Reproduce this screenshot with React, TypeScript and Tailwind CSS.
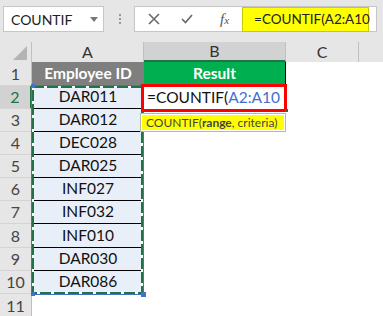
import React from 'react';

const ids = ['DAR011', 'DAR012', 'DEC028', 'DAR025', 'INF027', 'INF032', 'INF010', 'DAR030', 'DAR086'];
const heights = ['h-[24px]', 'h-[23px]', 'h-[23px]', 'h-[23px]', 'h-[23px]', 'h-[23px]', 'h-[23px]', 'h-[24px]', 'h-[23px]', 'h-[23px]'];

const RowHead: React.FC<{ n: number; active?: boolean }> = ({ n, active }) => (
  <div
    className={
      'w-[32px] shrink-0 flex items-center justify-center border-b border-[#d4d4d4] text-[16px] ' +
      (active
        ? 'bg-[#d2d2d2] text-[#217346] border-r-2 border-r-[#217346]'
        : 'bg-[#e6e6e6] text-[#444] border-r border-r-[#c0c0c0]')
    }
  >
    {n}
  </div>
);

export default function App() {
  return (
    <div className="w-[383px] h-[316px] overflow-hidden bg-white relative font-['Lato',sans-serif] text-[#222]">
      {/* formula toolbar */}
      <div className="h-[42px] bg-[#e6e6e6] flex items-start pt-[6px] pl-[3px]">
        <div className="w-[101px] h-[26px] bg-white border border-[#c6c6c6] flex items-center pl-[7px] pr-[5px]">
          <span className="text-[14px] text-[#222] flex-1">COUNTIF</span>
          <span className="w-0 h-0 border-l-[4px] border-r-[4px] border-t-[5px] border-l-transparent border-r-transparent border-t-[#777]" />
        </div>
        <div className="ml-[15px] mt-[8px] flex flex-col gap-[2px]">
          <span className="w-[2px] h-[2px] bg-[#9a9a9a]" />
          <span className="w-[2px] h-[2px] bg-[#9a9a9a]" />
          <span className="w-[2px] h-[2px] bg-[#9a9a9a]" />
        </div>
        <div className="ml-[13px] w-[243px] h-[26px] bg-white border border-[#c6c6c6] flex items-center">
          <svg width="12" height="12" viewBox="0 0 12 12" className="ml-[13px]">
            <path d="M1 1 L11 11 M11 1 L1 11" stroke="#6a6a6a" strokeWidth="1.6" />
          </svg>
          <svg width="12" height="10" viewBox="0 0 12 10" className="ml-[21px]">
            <path d="M1 5 L4.5 8.5 L11 1" stroke="#6a6a6a" strokeWidth="1.7" fill="none" />
          </svg>
          <span className="ml-[27px] font-['Liberation_Serif',serif] italic text-[15px] text-[#555]">
            f<span className="text-[11px]">x</span>
          </span>
          <div className="ml-[13px] w-[127px] h-[25px] bg-[#ffff00] border border-[#c9c900] flex items-center pl-[11px]">
            <span className="text-[13.5px] text-[#222] whitespace-nowrap">=COUNTIF(A2:A10</span>
          </div>
        </div>
      </div>

      {/* column headers */}
      <div className="flex h-[20px] bg-[#e6e6e6] text-[16px] text-[#333]">
        <div className="w-[32px] shrink-0 border-r border-[#c0c0c0] flex items-end justify-end pr-[4px] pb-[2px]">
          <svg width="14" height="14" viewBox="0 0 14 14">
            <polygon points="14,0 14,14 0,14" fill="#b4b4b4" />
          </svg>
        </div>
        <div className="w-[112px] shrink-0 border-r border-[#c0c0c0] flex items-center justify-center">A</div>
        <div className="w-[142px] shrink-0 border-r border-[#c0c0c0] bg-[#d2d2d2] border-b-2 border-b-[#217346] flex items-center justify-center">B</div>
        <div className="w-[73px] shrink-0 border-r border-[#c0c0c0] flex items-center justify-center">C</div>
        <div className="flex-1" />
      </div>

      {/* grid rows */}
      <div className="flex flex-col">
        <div className={'flex ' + heights[0]}>
          <RowHead n={1} />
          <div className="w-[112px] shrink-0 bg-[#7f7f7f] border-b border-black flex items-center justify-center text-white font-bold text-[15.5px]">
            Employee ID
          </div>
          <div className="w-[142px] shrink-0 bg-[#00b050] border-b border-r border-black flex items-center justify-center text-white font-bold text-[15.5px]">
            Result
          </div>
        </div>
        {ids.map((id, i) => (
          <div key={id} className={'flex ' + heights[i + 1]}>
            <RowHead n={i + 2} active={i === 0} />
            <div className="w-[112px] shrink-0 bg-[#e9eff8] border-b border-black flex items-center justify-center text-[15.5px] text-[#111]">
              {id}
            </div>
          </div>
        ))}
        <div className="flex h-[24px]">
          <RowHead n={11} />
        </div>
      </div>

      {/* copy range marching ants + reference highlight */}
      <svg className="absolute left-[31px] top-[84px]" width="116" height="214" viewBox="0 0 116 214">
        <rect x="0.5" y="1.5" width="112" height="209" fill="none" stroke="#4472c4" strokeWidth="1" />
        <rect x="2" y="3" width="109" height="206" fill="none" stroke="#ffffff" strokeWidth="2" />
        <rect x="2" y="3" width="109" height="206" fill="none" stroke="#217346" strokeWidth="2" strokeDasharray="11 3" />
        <rect x="0" y="0" width="4" height="4" fill="#4472c4" />
        <rect x="110" y="0" width="4" height="4" fill="#4472c4" />
        <rect x="0" y="208" width="4" height="4" fill="#4472c4" />
        <rect x="110" y="208" width="5" height="5" fill="#4472c4" />
      </svg>

      {/* in-cell editor */}
      <div className="absolute left-[141px] top-[84px] w-[146px] h-[28px] border-[3px] border-[#ff0000] bg-white flex items-center pl-[3px]">
        <span className="text-[15.5px] text-[#111] whitespace-nowrap">
          =COUNTIF(<span className="text-[#3f6fd0]">A2:A10</span>
        </span>
      </div>
      <span className="absolute left-[285px] top-[109px] w-[3px] h-[3px] bg-[#217346]" />

      {/* function tooltip */}
      <div className="absolute left-[140px] top-[113px] w-[146px] h-[19px] border border-[#b5b5b5] bg-white p-[1px]">
        <div className="w-full h-full bg-[#ffff00] flex items-center pl-[4px] text-[12px] text-[#444] whitespace-nowrap">
          COUNTIF(<span className="font-bold">range</span>, criteria)
        </div>
      </div>
    </div>
  );
}
